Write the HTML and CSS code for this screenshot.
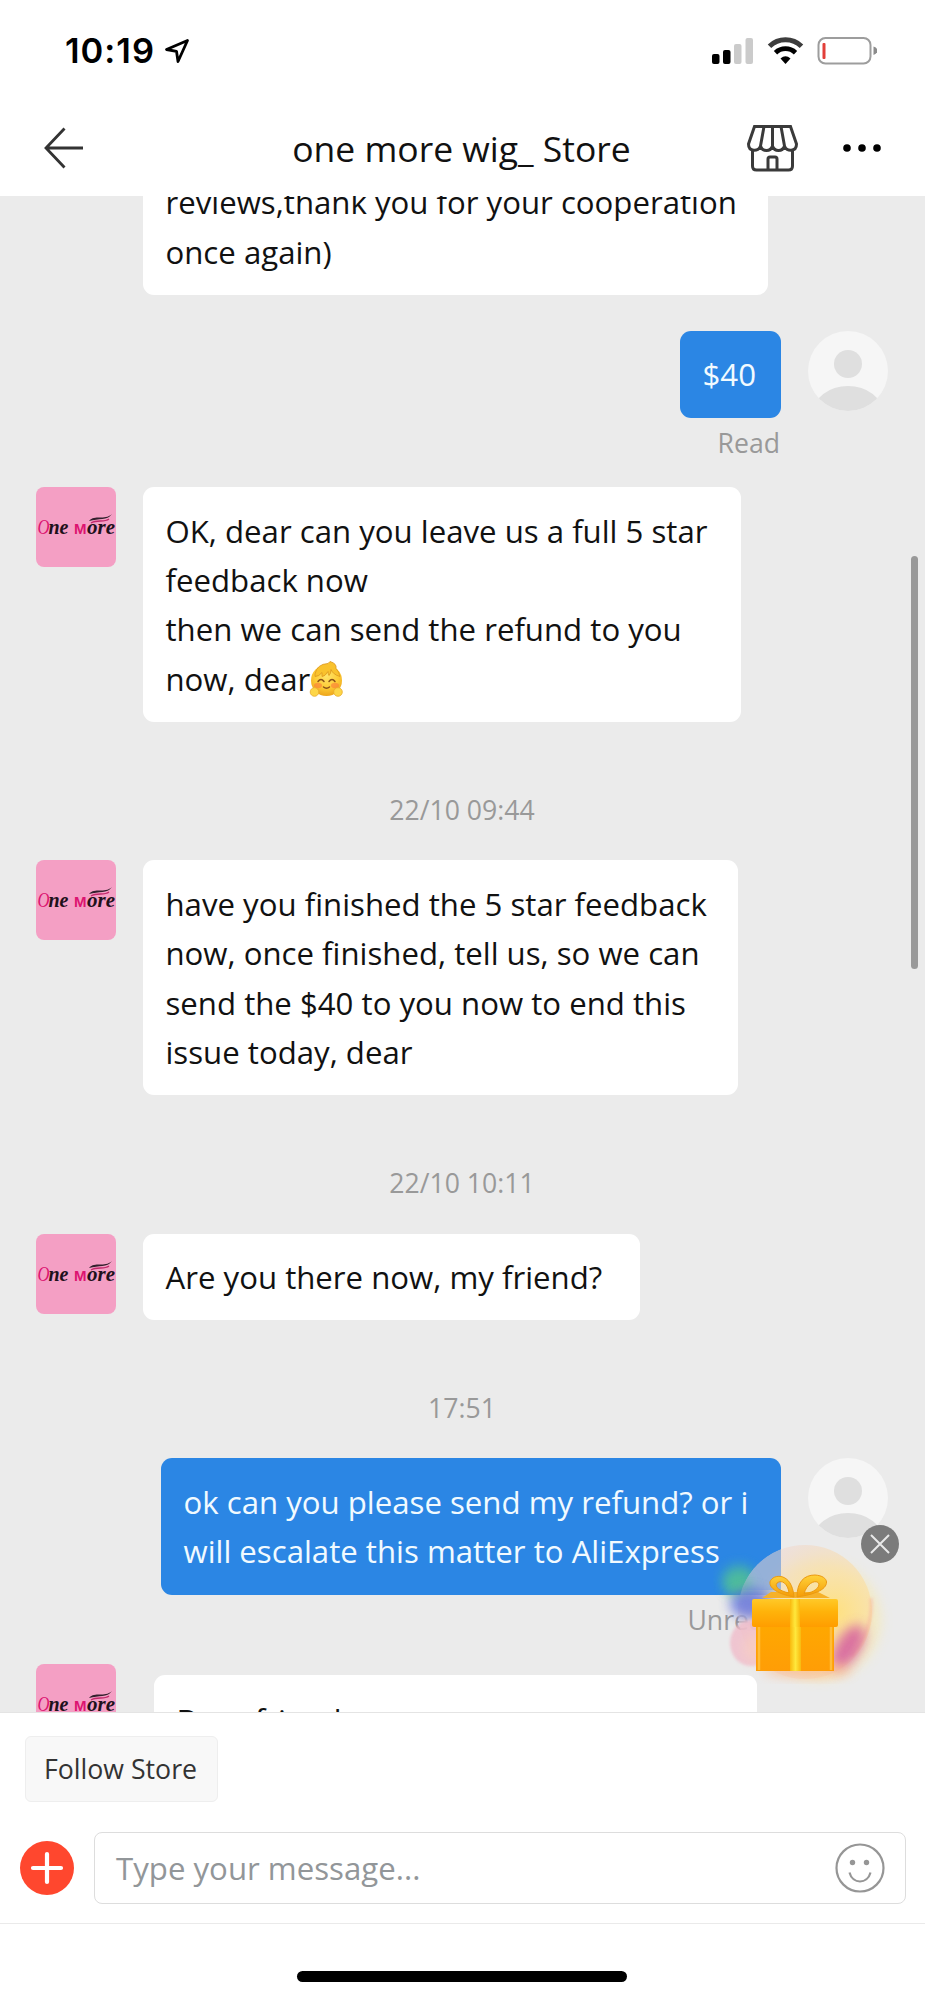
FILE: index.html
```html
<!DOCTYPE html>
<html lang="en">
<head>
<meta charset="utf-8">
<title>one more wig_ Store</title>
<link rel="stylesheet" href="styles.css">
</head>
<body>
<svg class="defs" aria-hidden="true">
  <defs>
    <linearGradient id="lid" x1="0" y1="0" x2="0" y2="1"><stop offset="0" stop-color="#ffc928"/><stop offset=".45" stop-color="#ffb30a"/><stop offset="1" stop-color="#ff9d00"/></linearGradient>
    <linearGradient id="box" x1="0" y1="0" x2="0" y2="1"><stop offset="0" stop-color="#fb8708"/><stop offset=".25" stop-color="#ffa800"/><stop offset="1" stop-color="#ff9d06"/></linearGradient>
    <linearGradient id="ribbon" x1="0" y1="0" x2="1" y2="0"><stop offset="0" stop-color="#f9b90e"/><stop offset=".5" stop-color="#ffe83c"/><stop offset="1" stop-color="#f9b90e"/></linearGradient>
    <linearGradient id="bow" x1="0" y1="0" x2="0" y2="1"><stop offset="0" stop-color="#ffd23a"/><stop offset="1" stop-color="#f59b07"/></linearGradient>
    <radialGradient id="glow" cx=".72" cy=".5" r=".72"><stop offset="0" stop-color="#ffe07c" stop-opacity=".95"/><stop offset=".4" stop-color="#fae0a4" stop-opacity=".75"/><stop offset=".8" stop-color="#f0d9cd" stop-opacity=".6"/><stop offset="1" stop-color="#ecdcd8" stop-opacity=".6"/></radialGradient>
    <radialGradient id="face" cx=".5" cy=".35" r=".65"><stop offset="0" stop-color="#ffe46a"/><stop offset=".6" stop-color="#fdcb35"/><stop offset="1" stop-color="#eda51c"/></radialGradient>
    <filter id="soft" x="-50%" y="-50%" width="200%" height="200%"><feGaussianBlur stdDeviation="6"/></filter>
    <filter id="softer" x="-50%" y="-50%" width="200%" height="200%"><feGaussianBlur stdDeviation="1.5"/></filter>
    <clipPath id="round"><circle cx="40" cy="40" r="40"/></clipPath>
    <clipPath id="bubble"><circle cx="92" cy="76" r="67"/></clipPath>
    <symbol id="user" viewBox="0 0 80 80">
      <circle cx="40" cy="40" r="40" fill="#f6f6f6"/>
      <g clip-path="url(#round)" fill="#dfdfdf"><circle cx="40" cy="33" r="14"/><ellipse cx="40" cy="82" rx="35" ry="27"/></g>
    </symbol>
    <symbol id="brand" viewBox="0 0 80 80">
      <rect width="80" height="80" fill="#f49fc4"/>
      <g font-family="Liberation Serif, serif" font-style="italic" font-weight="bold" font-size="20" fill="#1f111b">
        <text x="1.500" y="46.500" font-weight="normal" fill="#dc1470" textLength="12" lengthAdjust="spacingAndGlyphs">O</text>
        <text x="12.500" y="46.500" textLength="20" lengthAdjust="spacingAndGlyphs">ne</text>
        <text x="38" y="46.500" font-family="Liberation Sans, sans-serif" font-style="normal" font-size="15" fill="#dc1470">M</text>
        <text x="51" y="46.500" textLength="28" lengthAdjust="spacingAndGlyphs">ore</text>
      </g>
      <path d="M53 34c6-7 15 0 23-7-5 7-13 4-23 7" fill="#33202e"/>
      <path d="M55 36c6-4 13 0 18-4" fill="none" stroke="#c2286c" stroke-width="1.300"/>
    </symbol>
  </defs>
</svg>
<div class="phone">
  <header class="top">
    <div class="status">
      <div class="clock"><span>10:19</span>
        <svg width="26" height="26" viewBox="0 0 26 26"><path d="M23.500 2.500 2.500 11.500l10 1.800 1.500 10.200z" fill="none" stroke="#000" stroke-width="2.800" stroke-linejoin="round"/></svg>
      </div>
      <div class="signals">
        <svg width="165" height="28" viewBox="0 0 165 28">
          <rect x="0" y="17" width="7.500" height="10" rx="2"/><rect x="11" y="13" width="7.500" height="14" rx="2"/>
          <rect x="22" y="7" width="7.500" height="20" rx="2" fill="#cbcbcb"/><rect x="33.500" y="1" width="7.500" height="26" rx="2" fill="#cbcbcb"/>
          <path d="M57.500 9.200a23 23 0 0 1 32 0" fill="none" stroke="#3d3d3d" stroke-width="5"/>
          <path d="M63.500 15.700a14.500 14.500 0 0 1 20 0" fill="none" stroke="#000" stroke-width="4.800"/>
          <path d="M68.500 21.500q5-4.500 10 0l-5 5.500z"/>
          <rect x="106.500" y="1" width="52" height="25.500" rx="7" fill="none" stroke="#9d9d9d" stroke-width="2"/>
          <rect x="110.500" y="6" width="3" height="16" rx="1" fill="#e23f3a"/><path d="M161.500 9.500q3.800 1 3.800 4.200t-3.800 4.300z" fill="#8b8b8b"/>
        </svg>
      </div>
    </div>
    <div class="nav">
      <svg class="back" width="42" height="42" viewBox="0 0 42 42"><path d="M21.500 1.500 3 21l18.500 19.500M3 21h37" fill="none" stroke="#333" stroke-width="2.800"/></svg>
      <h1 class="title">one more wig_ Store</h1>
      <svg class="shop" width="52" height="48" viewBox="1 0 52 48" fill="none" stroke="#3a3a3a" stroke-width="3">
        <path d="M8.500 2.500h36l6 17.500c0 8-10 8-12 2-2 6-10 6-12 0-2 6-10 6-12 0-2 6-12 6-12-2zM18 2.500 14.500 22M26.500 2.500V22M35 2.500 38.500 22"/>
        <path d="M6.500 25v17q0 4 4 4h32q4 0 4-4V25M22 46V35q0-2 2-2h5q2 0 2 2v11"/>
      </svg>
      <svg class="more" width="38" height="8" viewBox="0 0 38 8"><circle cx="4" cy="4" r="3.800"/><circle cx="19" cy="4" r="3.800"/><circle cx="34" cy="4" r="3.800"/></svg>
    </div>
  </header>

  <main class="chat">
    <div class="row first"><div class="bubble w1">reviews,thank you for your cooperation<br>once again)</div></div>
    <div class="row mine r40"><div class="sent"><div class="bubble blue w0">$40</div><span class="receipt">Read</span></div><svg class="user"><use href="#user"/></svg></div>
    <div class="row rok"><svg class="brand"><use href="#brand"/></svg>
      <div class="bubble w2">OK, dear can you leave us a full 5 star<br>feedback now<br>then we can send the refund to you<br>now, dear<svg class="emoji" viewBox="0 0 35 37">
        <circle cx="17.500" cy="19.500" r="15.500" fill="url(#face)"/>
        <path d="M6 13Q8 3 19 2.500l2-2q7 2 6 7 3 3 4 8-7-2-9-7 0 4-2 6-1-2-1-4-3 5-6 5v-4q-3 4-7 4z" fill="#f9c22d" stroke="#dc9720" stroke-width=".8"/>
        <path d="M9 20.500q3-4 6 0M20 20.500q3-4 6 0M14.500 26q3 2.500 6 0" fill="none" stroke="#8a5018" stroke-width="1.500" stroke-linecap="round"/>
        <ellipse cx="9" cy="24.500" rx="4" ry="2.800" fill="#fb7a3a" opacity=".6"/><ellipse cx="26" cy="24.500" rx="4" ry="2.800" fill="#fb7a3a" opacity=".6"/>
        <circle cx="5.500" cy="31" r="4.300" fill="#fdd648" stroke="#e8ab2c" stroke-width=".8"/><circle cx="29" cy="31" r="4.300" fill="#fdd648" stroke="#e8ab2c" stroke-width=".8"/>
      </svg></div></div>
    <time class="stamp">22/10 09:44</time>
    <div class="row"><svg class="brand"><use href="#brand"/></svg><div class="bubble w3">have you finished the 5 star feedback<br>now, once finished, tell us, so we can<br>send the $40 to you now to end this<br>issue today, dear</div></div>
    <time class="stamp">22/10 10:11</time>
    <div class="row"><svg class="brand"><use href="#brand"/></svg><div class="bubble w4">Are you there now, my friend?</div></div>
    <time class="stamp">17:51</time>
    <div class="row mine rlast"><div class="sent"><div class="bubble blue w5">ok can you please send my refund? or i<br>will escalate this matter to AliExpress</div><span class="receipt">Unread</span></div><svg class="user"><use href="#user"/></svg></div>
    <div class="row"><svg class="brand"><use href="#brand"/></svg><div class="bubble w6">Dear friend</div></div>
    <div class="scrollbar"></div>
    <svg class="gift" width="190" height="170" viewBox="0 0 190 170">
      <ellipse cx="106" cy="84" rx="62" ry="60" fill="#ffe98a" opacity=".4" filter="url(#soft)"/>
      <ellipse cx="26" cy="44" rx="17" ry="15" fill="#58cf83" opacity=".6" filter="url(#soft)"/>
      <circle cx="92" cy="76" r="67" fill="url(#glow)"/>
      <g clip-path="url(#bubble)"><path d="M20 0H68V54H20z" fill="#93afd8" opacity=".85"/></g>
      <path d="M158 62q3 30-20 58" fill="none" stroke="#f7b6a0" stroke-width="3" opacity=".6" filter="url(#softer)"/>
      <ellipse cx="26" cy="50" rx="13" ry="11" fill="#58c98a" opacity=".55" filter="url(#soft)"/>
      <ellipse cx="38" cy="68" rx="21" ry="15" fill="#5468dc" opacity=".75" filter="url(#soft)"/>
      <ellipse cx="38" cy="107" rx="21" ry="23" fill="#f0bccb" opacity=".8" filter="url(#softer)"/>
      <ellipse cx="45" cy="112" rx="14" ry="15" fill="#fbd3bd" opacity=".6" filter="url(#soft)"/>
      <ellipse cx="135" cy="111" rx="12" ry="25" transform="rotate(32 135 111)" fill="#d04b9c" opacity=".75" filter="url(#soft)"/>
      <ellipse cx="94" cy="134" rx="44" ry="7" fill="#ffae77" opacity=".6" filter="url(#soft)"/>
      <path d="M43 73h78v62H43z" fill="url(#box)"/><path d="M43 73h78v5H43z" fill="#ee7608"/>
      <path d="M46 79v55M118 79v55" stroke="#ffbd39" stroke-width="2.500"/>
      <path d="M77 73h11v62H77z" fill="url(#ribbon)"/>
      <path d="M49 62l9-6h47l12 6z" fill="#f6b129"/><rect x="39" y="63" width="86" height="28" rx="2" fill="url(#lid)"/>
      <path d="M77 63h10v28H77z" fill="url(#ribbon)"/>
      <path fill-rule="evenodd" d="M81 61C70 59 56 54 57 46 59 38 79 35 81 61zM76 57C75 48 69 43 64 47 61 51 67 55 76 57zM84 61C84 46 91 39 102 39 117 40 117 51 104 56 97 59 90 60 84 61zM91 58C97 57 106 54 106 48 104 43 94 46 91 58z" fill="url(#bow)" stroke="#eb9911" stroke-width="1"/>
    </svg>
    <svg class="close" width="38" height="38" viewBox="0 0 38 38"><circle cx="19" cy="19" r="19" fill="#7b7b7b"/><path d="M10 10l18 18M28 10 10 28" stroke="#e8e8e8" stroke-width="2"/></svg>
  </main>

  <footer class="composer">
    <button class="follow">Follow Store</button>
    <div class="entry">
      <svg width="54" height="54" viewBox="0 0 54 54"><circle cx="27" cy="27" r="27" fill="#ff472e"/><path d="M27 13v28M13 27h28" stroke="#fff" stroke-width="4.200" stroke-linecap="round"/></svg>
      <div class="field"><span>Type your message...</span>
        <svg width="50" height="50" viewBox="0 0 50 50" fill="none" stroke="#969696" stroke-width="2.200"><circle cx="25" cy="25" r="23.500"/><path d="M14.500 29.500c3 12 18 12 21 0"/><g fill="#969696" stroke="none"><circle cx="17.500" cy="19.500" r="2.700"/><circle cx="31.500" cy="19.500" r="2.700"/></g></svg>
      </div>
    </div>
    <div class="bottom"><div class="home"></div></div>
  </footer>
</div>
</body>
</html>
```
FILE: styles.css
```css
* { box-sizing: border-box; }
body { margin: 0; background: #fff; font-family: "Open Sans", "Noto Sans", sans-serif; color: #111; }
.defs { position: absolute; width: 0; height: 0; }
.phone { width: 925px; height: 2000px; display: flex; flex-direction: column; overflow: hidden; }
svg { display: block; flex: none; }
.top { height: 196px; flex: none; }
.status { height: 101px; display: flex; justify-content: space-between; padding: 0 48px 0 65px; align-items: center; }
.clock { display: flex; align-items: center; gap: 9px; font: 600 34.5px/40px Inter, sans-serif; letter-spacing: 1px; color: #000; }
.nav { height: 94px; display: grid; grid-template-columns: 42px 1fr 52px 38px; align-items: center; padding: 0 44px 0 43px; column-gap: 44px; }
.title { margin: 0; padding-left: 91px; font-size: 35.5px; font-weight: 400; line-height: 44px; text-align: center; white-space: nowrap; color: #111; }
.chat { position: relative; height: 1516px; flex: none; overflow: hidden; background: #ebebeb; }
.row { display: flex; align-items: flex-start; gap: 27px; padding-left: 36px; }
.first { padding-left: 143px; margin-top: -37px; }
.bubble { background: #fff; border-radius: 11px; padding: 19.3px 22.5px 18px; font-size: 31.18px; line-height: 49.4px; white-space: nowrap; }
.brand { width: 80px; height: 80px; border-radius: 8px; }
.user { width: 80px; height: 80px; }
.mine { justify-content: flex-end; padding: 0 37px 0 0; }
.sent { display: flex; flex-direction: column; align-items: flex-end; }
.blue { background: #2b86e4; color: #f1faff; }
.receipt { font-size: 26.6px; line-height: 36px; color: #999; margin: 7px 1px 0 0; }
.r40 { margin-top: 35.9px; }
.rok { margin-top: 26.6px; }
.w0 { width: 101px; }
.w1 { width: 625px; }
.w2 { width: 598px; }
.w3 { width: 595px; }
.w4 { width: 497px; }
.w5 { width: 620px; }
.w6 { width: 603px; margin: 11px 0 0 11px; padding-top: 21px; }
.rlast { margin-bottom: 26px; }
.stamp { display: block; text-align: center; font-size: 26.6px; line-height: 36px; color: #999; padding: 70px 1px 32.2px 0; }
.emoji { display: inline-block; width: 35px; height: 37px; margin-left: -1px; vertical-align: -7px; }
.scrollbar { position: absolute; left: 911px; top: 360px; width: 7px; height: 413px; border-radius: 4px; background: #999; }
.gift { position: absolute; left: 713px; top: 1340px; }
.close { position: absolute; left: 861px; top: 1329px; }
.composer { flex: 1; border-top: 1px solid #e4e4e4; display: flex; flex-direction: column; }
.follow { align-self: flex-start; margin: 23px 0 0 25px; width: 193px; height: 66px; padding: 0 2px 0 0; border: 1px solid #eee; border-radius: 6px; background: #f8f8f8; font: 26.7px/36px "Open Sans", sans-serif; color: #333; }
.entry { display: flex; align-items: center; gap: 20px; padding: 30px 19px 0 20px; }
.field { flex: 1; height: 72px; display: flex; align-items: center; justify-content: space-between; padding: 0 20px 0 21px; border: 1px solid #ddd; border-radius: 8px; font-size: 31.2px; color: #929699; }
.bottom { flex: 1; margin-top: 19px; border-top: 1px solid #eaeaea; padding-top: 47px; }
.home { width: 330px; height: 11px; margin: 0 0 0 297px; border-radius: 6px; background: #000; }
```
